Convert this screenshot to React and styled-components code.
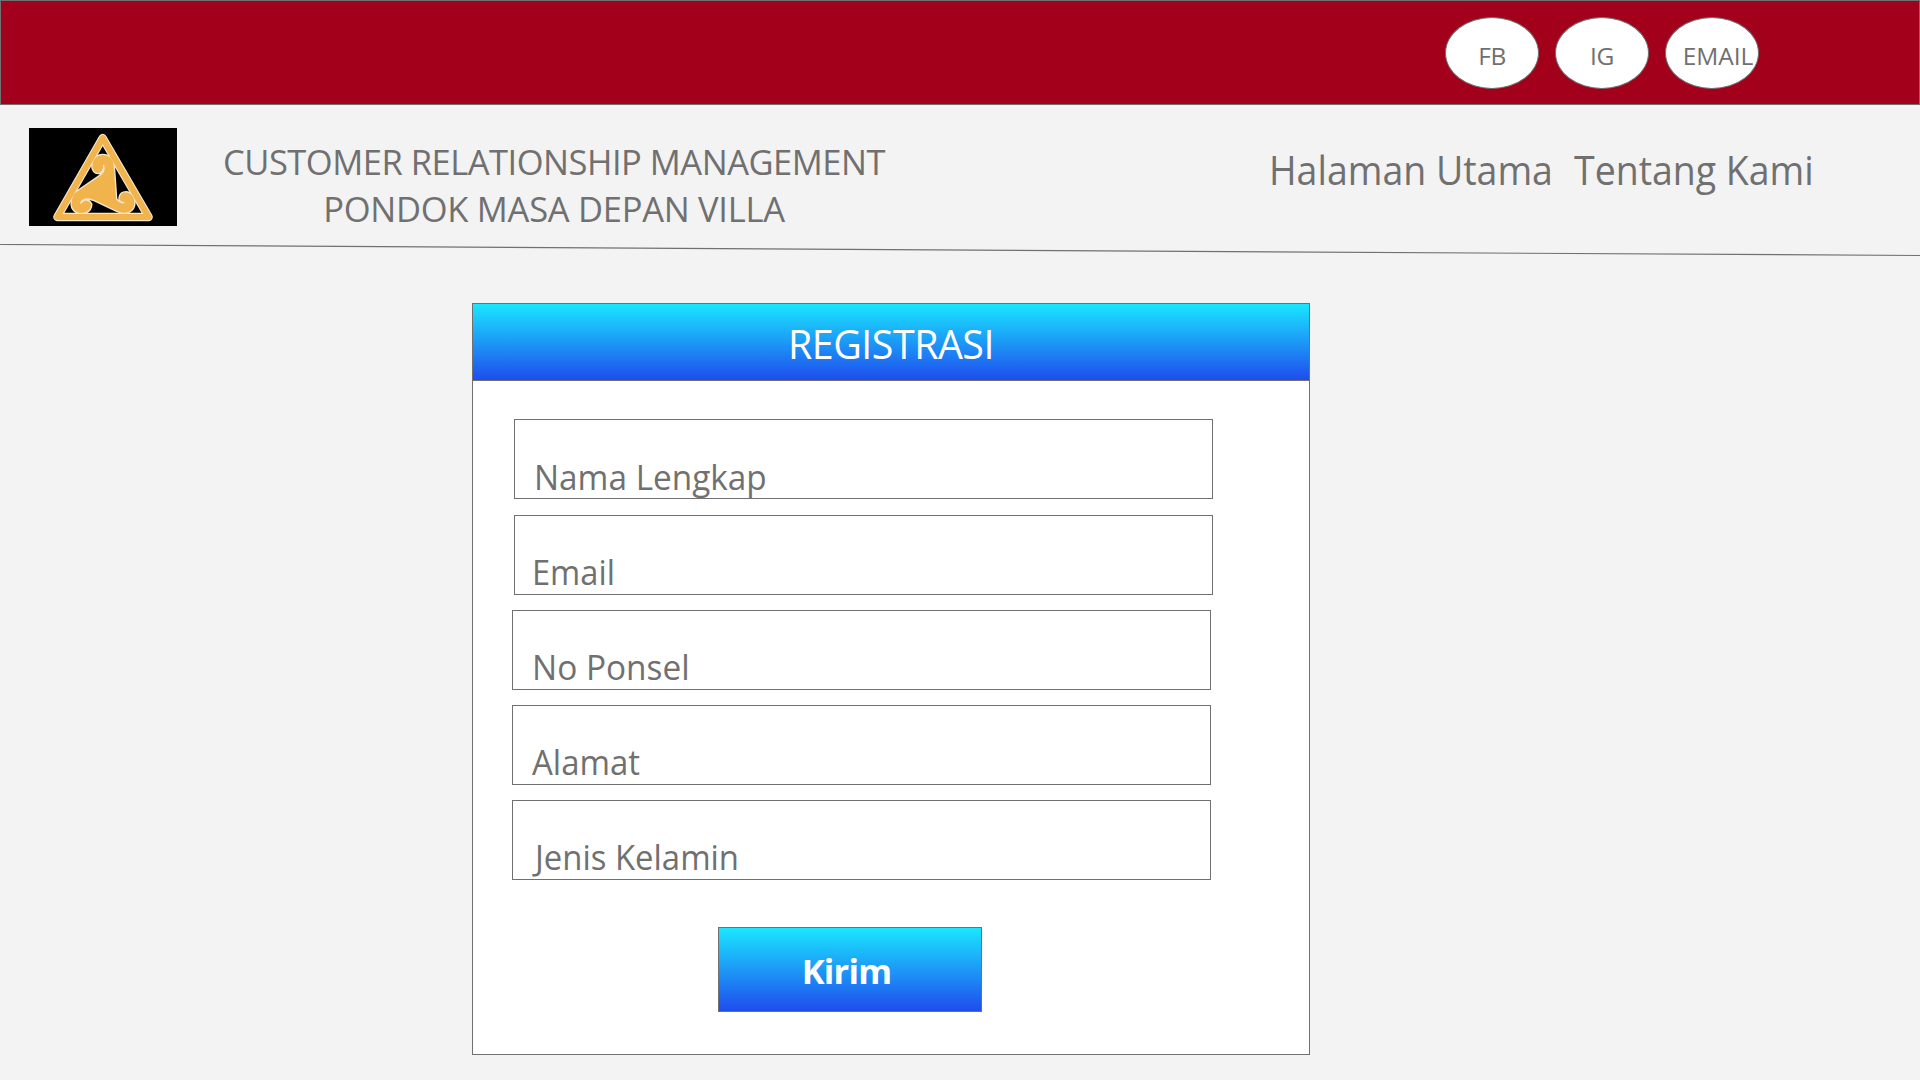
import React from "react";
import styled, { createGlobalStyle } from "styled-components";

const GlobalStyle = createGlobalStyle`
  *, *::before, *::after { box-sizing: border-box; }
  body {
    margin: 0;
    background: #f3f3f3;
    color: #707070;
    font-family: "Open Sans", "Noto Sans", sans-serif;
    overflow: hidden;
  }
`;

const Page = styled.div`
  width: 1920px;
  height: 1080px;
  display: flex;
  flex-direction: column;
`;

const TopBar = styled.div`
  flex: none;
  height: 105px;
  padding: 16px 160px 0 0;
  display: flex;
  justify-content: flex-end;
  gap: 16px;
  background: #a2001b;
  border: 1px solid #707070;
`;

const SocialLink = styled.a`
  width: 94px;
  height: 72px;
  padding: 21px 0 0 ${(p) => p.$inset || 0}px;
  display: flex;
  justify-content: center;
  align-items: flex-start;
  border: 1px solid #707070;
  border-radius: 50%;
  background: #fff;
  font-size: 24.5px;
  line-height: 33px;
  letter-spacing: ${(p) => p.$tracking}px;
`;

const Header = styled.header`
  flex: none;
  height: 139px;
  padding-left: 29px;
  display: flex;
  align-items: flex-start;
`;

const Logo = styled.svg`
  flex: none;
  width: 148px;
  height: 98px;
  margin-top: 23px;
  background: #000;
`;

const Title = styled.h1`
  width: 680px;
  margin: 33px 0 0 37px;
  display: flex;
  flex-direction: column;
  align-items: center;
  font-size: 34.5px;
  font-weight: 400;
  line-height: 47px;
  white-space: nowrap;
`;

const TitleLine = styled.span`
  letter-spacing: ${(p) => p.$tracking}px;
`;

const Nav = styled.nav`
  margin: 38px 0 0 375px;
  display: flex;
  font-size: 39.4px;
  line-height: 54px;
  white-space: nowrap;
`;

const NavLink = styled.a`
  width: ${(p) => p.$width}px;
  transform: scaleX(0.951);
  transform-origin: left;
`;

const Divider = styled.svg`
  flex: none;
  display: block;
  width: 1920px;
  height: 13px;
`;

const Card = styled.section`
  flex: none;
  width: 838px;
  height: 752px;
  margin: 46px 0 0 472px;
  background: #fff;
  border: 1px solid #707070;
`;

const CardHeader = styled.h2`
  height: 77px;
  margin: 0;
  padding-top: 13px;
  background: linear-gradient(#1ae6ff, #1f4cee);
  border-bottom: 1px solid #707070;
  color: #fff;
  font-size: 39.4px;
  font-weight: 400;
  line-height: 54px;
  letter-spacing: -0.5px;
  text-align: center;
`;

const Fields = styled.div`
  padding: 38px 0 0 39px;
  display: flex;
  flex-direction: column;
  gap: 15px;
`;

const Field = styled.div`
  width: 699px;
  height: 80px;
  margin-left: ${(p) => (p.$shifted ? 2 : 0)}px;
  margin-bottom: ${(p) => (p.$first ? 1 : 0)}px;
  padding: ${(p) => (p.$first ? 33 : 32)}px 0 0 ${(p) => p.$indent}px;
  border: 1px solid #707070;
`;

const FieldLabel = styled.label`
  display: inline-block;
  font-size: 34.5px;
  line-height: 47px;
  white-space: nowrap;
  vertical-align: top;
  transform: scaleX(${(p) => p.$stretch});
  transform-origin: left;
`;

const SubmitButton = styled.button`
  display: block;
  width: 264px;
  height: 85px;
  margin: 47px 0 0 245px;
  padding: 2px 7px 0 0;
  border: 1px solid #707070;
  background: linear-gradient(#1ae6ff, #1f4cee);
  color: #fff;
  font-family: inherit;
  font-size: 34.5px;
  font-weight: 700;
  line-height: 47px;
  letter-spacing: -0.8px;
  text-align: center;
`;

const SWIRL =
  "M226 306 L298 257 C311 249 314 239 311 226 C313 239 305 250 294 251 C283 251 275 241 275 226 C276 206 290 193 308 193 C329 193 341 207 343 226 L350 326 C356 336 362 339 371 338 C360 336 356 329 357 322 C360 308 369 305 378 305 C395 306 405 321 405 338 C405 357 391 370 374 370 C366 370 358 368 350 364 L282 332 C260 322 246 328 242 339 C250 330 262 326 271 335 C276 340 276 345 275 348 C272 363 259 371 243 371 C225 371 213 358 213 342 C213 325 218 312 226 306 Z";

const FIELDS = [
  { label: "Nama Lengkap", indent: 18.5, stretch: 0.966, shifted: true, first: true },
  { label: "Email", indent: 17, stretch: 0.945, shifted: true },
  { label: "No Ponsel", indent: 18.5, stretch: 0.968 },
  { label: "Alamat", indent: 19, stretch: 0.955 },
  { label: "Jenis Kelamin", indent: 21.5, stretch: 0.953 },
];

export default function App() {
  return (
    <Page>
      <GlobalStyle />
      <TopBar>
        <SocialLink $tracking={-0.6}>FB</SocialLink>
        <SocialLink $tracking={-0.3}>IG</SocialLink>
        <SocialLink $tracking={-0.1} $inset={12}>EMAIL</SocialLink>
      </TopBar>
      <Header>
        <Logo viewBox="87 114 444 294" preserveAspectRatio="none">
          <g strokeLinejoin="round">
            <path d="M308 144 L172 381 L446 381 Z" fill="none" stroke="#f6e6cc" strokeWidth="25" />
            <path d={SWIRL} fill="#f1b44c" stroke="#f6e6cc" strokeWidth="4" />
            <path d="M308 144 L172 381 L446 381 Z" fill="none" stroke="#f1b44c" strokeWidth="18" />
          </g>
        </Logo>
        <Title>
          <TitleLine $tracking={-0.49}>CUSTOMER RELATIONSHIP MANAGEMENT</TitleLine>
          <TitleLine $tracking={-0.28}>PONDOK MASA DEPAN VILLA</TitleLine>
        </Title>
        <Nav>
          <NavLink $width={305}>Halaman Utama</NavLink>
          <NavLink $width={250}>Tentang Kami</NavLink>
        </Nav>
      </Header>
      <Divider viewBox="0 0 1920 13">
        <line x1="0" y1="0.5" x2="1920" y2="11.5" stroke="#707070" strokeWidth="1.2" />
      </Divider>
      <Card>
        <CardHeader>REGISTRASI</CardHeader>
        <Fields>
          {FIELDS.map((f) => (
            <Field key={f.label} $indent={f.indent} $shifted={f.shifted} $first={f.first}>
              <FieldLabel $stretch={f.stretch}>{f.label}</FieldLabel>
            </Field>
          ))}
        </Fields>
        <SubmitButton type="button">Kirim</SubmitButton>
      </Card>
    </Page>
  );
}
